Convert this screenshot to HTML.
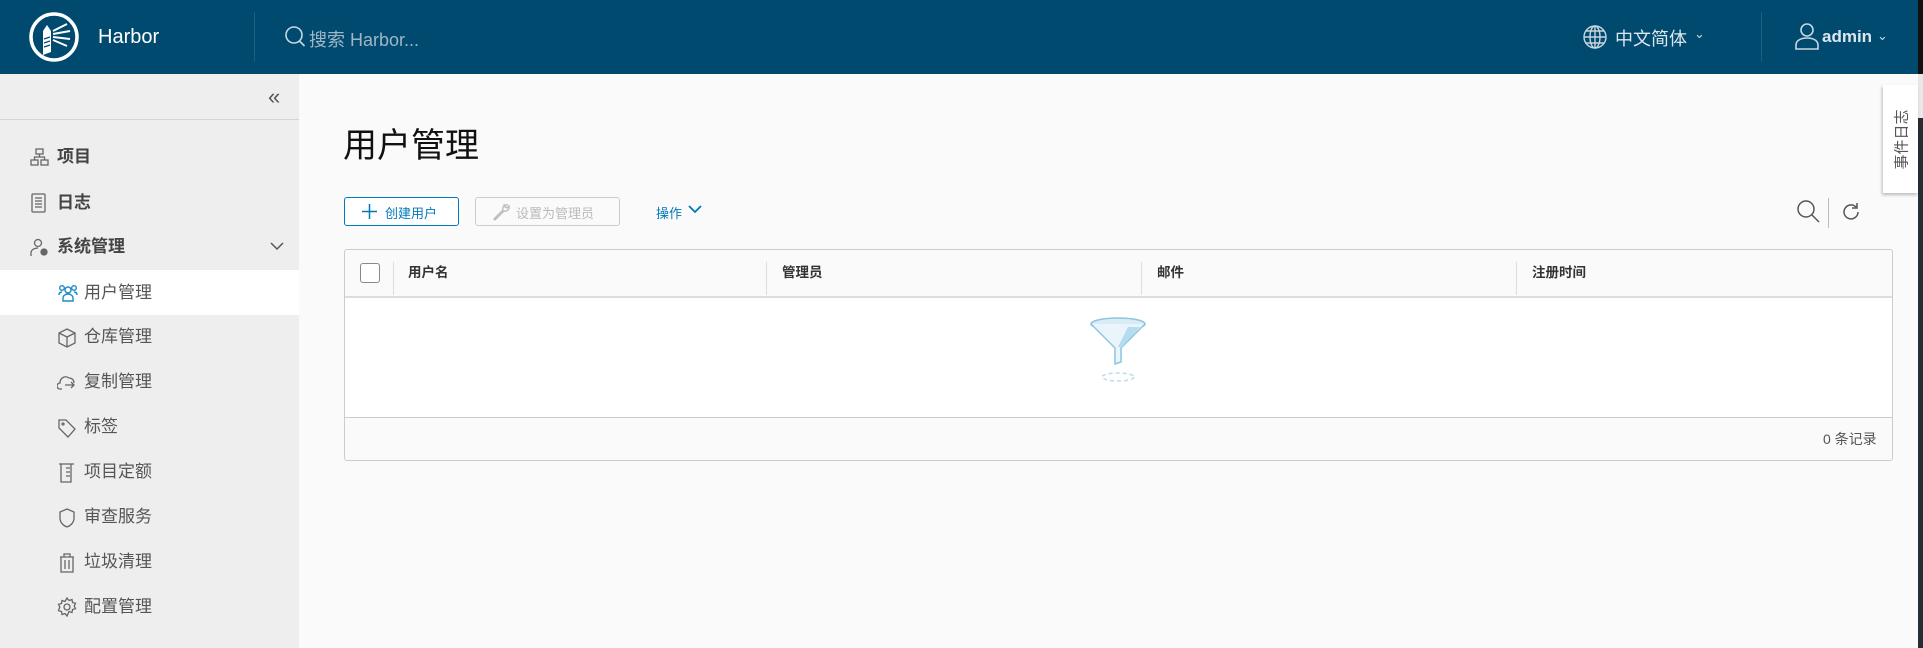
<!DOCTYPE html>
<html><head><meta charset="utf-8"><style>
*{margin:0;padding:0;box-sizing:border-box}
body{width:1923px;height:648px;overflow:hidden;background:#fafafa;font-family:"Liberation Sans","Noto Sans CJK SC",sans-serif;position:relative;color:#333}
.abs{position:absolute}
.hdr{left:0;top:0;width:1918px;height:74px;background:#004a70}
.side{left:0;top:74px;width:299px;height:574px;background:#eeeeee}
.it{position:absolute;left:57px;font-size:17px;font-weight:bold;color:#444;line-height:20px}
.sub{position:absolute;left:84px;font-size:17px;color:#555;line-height:20px}
.ic{position:absolute}
.th{position:absolute;top:263px;font-size:13.5px;font-weight:bold;color:#333;line-height:20px}
.cd{position:absolute;top:262px;width:1px;height:33px;background:#ddd}
</style></head><body>
<div class="abs hdr"></div>
<svg class="abs" style="left:28px;top:11px" width="54" height="54" viewBox="0 0 54 54">
<circle cx="26" cy="26" r="23" fill="none" stroke="#fff" stroke-width="3.5"/>
<path d="M15 20h8v21l-8 3z" fill="#fff"/><path d="M15 20l4-6 4 6z" fill="#fff"/>
<path d="M25 20l14-7M25 23l17-3M25 26l17 2M25 29l14 6" stroke="#fff" stroke-width="2"/>
<path d="M16 28l6-2M16 32l6-2M16 36l6-2" stroke="#004a70" stroke-width="1.2"/>
</svg>
<div class="abs" style="left:98px;top:25px;font-size:20px;color:#fff;line-height:24px">Harbor</div>
<div class="abs" style="left:254px;top:12px;width:1px;height:50px;background:#1c5f80"></div>
<svg class="abs" style="left:284px;top:25px" width="24" height="24" viewBox="0 0 24 24"><circle cx="10" cy="10" r="8" fill="none" stroke="#c8d6df" stroke-width="1.6"/><path d="M15.5 16l5 5" stroke="#c8d6df" stroke-width="1.6"/></svg>
<div class="abs" style="left:309px;top:26px;font-size:18px;color:#9fb6c5">搜索 Harbor...</div>
<svg class="abs" style="left:1582px;top:24px" width="26" height="26" viewBox="0 0 26 26" fill="none" stroke="#c8d6df" stroke-width="1.4"><circle cx="13" cy="13" r="11"/><ellipse cx="13" cy="13" rx="5" ry="11"/><path d="M2 13h22M4 7h18M4 19h18M13 2v22"/></svg>
<div class="abs" style="left:1615px;top:25px;font-size:18px;color:#dde6ec">中文简体</div>
<div class="abs" style="left:1694px;top:26px;font-size:13px;color:#c8d6df">⌄</div>
<div class="abs" style="left:1761px;top:12px;width:1px;height:50px;background:#1c5f80"></div>
<svg class="abs" style="left:1795px;top:22px" width="24" height="28" viewBox="0 0 24 28" fill="none" stroke="#c8d6df" stroke-width="1.6"><circle cx="12" cy="8" r="6"/><path d="M1 27v-4c0-4 4-7 11-7s11 3 11 7v4z"/></svg>
<div class="abs" style="left:1822px;top:27px;font-size:17px;font-weight:bold;color:#dde6ec">admin</div>
<div class="abs" style="left:1877px;top:28px;font-size:13px;color:#c8d6df">⌄</div>
<div class="abs" style="left:1918px;top:0;width:5px;height:74px;background:#111"></div>
<div class="abs" style="left:1918px;top:74px;width:5px;height:44px;background:#e8e8e8"></div>
<div class="abs" style="left:1918px;top:118px;width:5px;height:530px;background:#252d35"></div>

<div class="abs side"></div>
<div class="abs" style="left:268px;top:84px;font-size:22px;color:#555">«</div>
<div class="abs" style="left:0;top:119px;width:299px;height:1px;background:#d4d4d4"></div>
<svg class="ic" style="left:30px;top:148px" width="19" height="19" viewBox="0 0 19 19" fill="none" stroke="#666" stroke-width="1.3"><rect x="6" y="1" width="7" height="5"/><rect x="1" y="12" width="7" height="5"/><rect x="11" y="12" width="7" height="5"/><path d="M9.5 6v3M4.5 12V9h10v3"/></svg>
<div class="it" style="top:147px">项目</div>
<svg class="ic" style="left:31px;top:193px" width="15" height="20" viewBox="0 0 15 20" fill="none" stroke="#666" stroke-width="1.3"><rect x="1" y="1" width="13" height="18" rx="1"/><path d="M4 5h7M4 8h7M4 11h7M4 14h7"/></svg>
<div class="it" style="top:193px">日志</div>
<svg class="ic" style="left:30px;top:238px" width="20" height="19" viewBox="0 0 20 19" fill="none" stroke="#666" stroke-width="1.3"><circle cx="8" cy="5" r="3.5"/><path d="M1 18v-3c0-3 3-5 7-5"/><circle cx="14" cy="14" r="3" fill="#666"/></svg>
<div class="it" style="top:237px">系统管理</div>
<svg class="ic" style="left:270px;top:242px" width="14" height="9" viewBox="0 0 14 9" fill="none" stroke="#555" stroke-width="1.5"><path d="M1 1l6 6 6-6"/></svg>
<div class="abs" style="left:0;top:270px;width:299px;height:45px;background:#fff"></div>
<svg class="ic" style="left:58px;top:284px" width="20" height="18" viewBox="0 0 20 18" fill="none" stroke="#1a8bc8" stroke-width="1.4"><circle cx="10" cy="6" r="3"/><circle cx="4" cy="4" r="2.3"/><circle cx="16" cy="4" r="2.3"/><path d="M5 17v-3c0-2 2-4 5-4s5 2 5 4v3zM1 11c0-2 1-3 3-3M19 11c0-2-1-3-3-3"/></svg>
<div class="sub" style="top:283px">用户管理</div>
<svg class="ic" style="left:58px;top:328px" width="18" height="20" viewBox="0 0 18 20" fill="none" stroke="#666" stroke-width="1.3"><path d="M9 1l8 4v10l-8 4-8-4V5zM1 5l8 4 8-4M9 9v10"/></svg>
<div class="sub" style="top:327px">仓库管理</div>
<svg class="ic" style="left:57px;top:373px" width="20" height="18" viewBox="0 0 20 18" fill="none" stroke="#666" stroke-width="1.3"><path d="M5 16H3a2 2 0 010-6c0-5 5-8 9-5 3 0 5 2 5 5M8 12h9M14 9l3 3-3 3"/></svg>
<div class="sub" style="top:372px">复制管理</div>
<svg class="ic" style="left:58px;top:418px" width="18" height="20" viewBox="0 0 18 20" fill="none" stroke="#666" stroke-width="1.3"><path d="M1 2h7l9 9-7 8-9-9z"/><circle cx="5" cy="6" r="1"/></svg>
<div class="sub" style="top:417px">标签</div>
<svg class="ic" style="left:58px;top:463px" width="17" height="20" viewBox="0 0 17 20" fill="none" stroke="#666" stroke-width="1.3"><path d="M1 1h15M3 1v18h10V1M8 5h4M8 9h4M8 13h4"/></svg>
<div class="sub" style="top:462px">项目定额</div>
<svg class="ic" style="left:59px;top:508px" width="16" height="20" viewBox="0 0 16 20" fill="none" stroke="#666" stroke-width="1.3"><path d="M8 1l7 3v6c0 5-4 8-7 9-3-1-7-4-7-9V4z"/></svg>
<div class="sub" style="top:507px">审查服务</div>
<svg class="ic" style="left:59px;top:553px" width="16" height="20" viewBox="0 0 16 20" fill="none" stroke="#666" stroke-width="1.3"><path d="M1 4h14M5 4V1h6v3M2 4v15h12V4M6 7v9M10 7v9"/></svg>
<div class="sub" style="top:552px">垃圾清理</div>
<svg class="ic" style="left:57px;top:597px" width="20" height="20" viewBox="0 0 20 20" fill="none" stroke="#666" stroke-width="1.3"><circle cx="10" cy="10" r="3"/><path d="M10 1l2 2.5 3-1 .5 3 3 .8-1.3 2.7 1.3 2.7-3 .8-.5 3-3-1L10 19l-2-2.5-3 1-.5-3-3-.8L2.8 10 1.5 7.3l3-.8.5-3 3 1z"/></svg>
<div class="sub" style="top:597px">配置管理</div>

<div class="abs" style="left:343px;top:124px;font-size:34px;color:#111;line-height:44px">用户管理</div>
<div class="abs" style="left:344px;top:197px;width:115px;height:29px;border:1px solid #0079b8;border-radius:3px;background:#fff"></div>
<svg class="abs" style="left:362px;top:204px" width="15" height="15" viewBox="0 0 15 15" stroke="#0079b8" stroke-width="1.5"><path d="M7.5 0v15M0 7.5h15"/></svg>
<div class="abs" style="left:385px;top:203px;font-size:13px;color:#0079b8">创建用户</div>
<div class="abs" style="left:475px;top:197px;width:145px;height:29px;border:1px solid #ccc;border-radius:3px"></div>
<svg class="abs" style="left:492px;top:203px" width="18" height="18" viewBox="0 0 18 18" fill="none" stroke="#bbb" stroke-width="1.3"><path d="M16 2a4 4 0 00-5 5L2 16l1 1 9-9a4 4 0 005-5l-2 2-2-1-1-2z"/></svg>
<div class="abs" style="left:516px;top:203px;font-size:13px;color:#bbb">设置为管理员</div>
<div class="abs" style="left:656px;top:203px;font-size:13px;color:#0079b8">操作</div>
<svg class="abs" style="left:688px;top:205px" width="14" height="9" viewBox="0 0 14 9" fill="none" stroke="#0079b8" stroke-width="1.8"><path d="M1 1l6 6 6-6"/></svg>
<svg class="abs" style="left:1796px;top:199px" width="26" height="26" viewBox="0 0 26 26" fill="none" stroke="#555" stroke-width="1.5"><circle cx="10" cy="10" r="8"/><path d="M16 16l7 7"/></svg>
<div class="abs" style="left:1828px;top:198px;width:1px;height:30px;background:#bbb"></div>
<svg class="abs" style="left:1841px;top:202px" width="20" height="20" viewBox="0 0 20 20" fill="none" stroke="#555" stroke-width="1.5"><path d="M17 10a7 7 0 11-2-5M16 1v5h-5"/></svg>

<div class="abs" style="left:344px;top:249px;width:1549px;height:212px;border:1px solid #ccc;border-radius:3px;background:#fafafa"></div>
<div class="abs" style="left:345px;top:296px;width:1547px;height:2px;background:#ddd"></div>
<div class="abs" style="left:345px;top:298px;width:1547px;height:120px;background:#fff;border-bottom:1px solid #ccc"></div>
<div class="abs" style="left:360px;top:263px;width:20px;height:20px;border:1px solid #888;border-radius:3px;background:#fff"></div>
<div class="cd" style="left:393px"></div><div class="cd" style="left:766px"></div><div class="cd" style="left:1141px"></div><div class="cd" style="left:1516px"></div>
<div class="th" style="left:408px">用户名</div>
<div class="th" style="left:782px">管理员</div>
<div class="th" style="left:1157px">邮件</div>
<div class="th" style="left:1532px">注册时间</div>
<svg class="abs" style="left:1088px;top:315px" width="60" height="70" viewBox="0 0 60 70">
<ellipse cx="30" cy="9" rx="27" ry="6" fill="#d8ecf6" stroke="#8cc4e2" stroke-width="1.5"/>
<path d="M3 9l24 24v16l6-2V33L57 9" fill="#eaf5fb" stroke="#8cc4e2" stroke-width="1.5"/>
<path d="M40 12l-10 20 4 0 18-20z" fill="#b5dbef"/>
<ellipse cx="30" cy="62" rx="16" ry="4" fill="none" stroke="#bcdcee" stroke-width="1.5" stroke-dasharray="4 3"/>
</svg>
<div class="abs" style="left:1823px;top:429px;font-size:14px;color:#555">0 条记录</div>

<div class="abs" style="left:1883px;top:85px;width:35px;height:108px;background:#fff;box-shadow:-1px 2px 3px rgba(0,0,0,.25)"></div>
<div class="abs" style="left:1883px;top:85px;width:35px;height:108px;display:flex;align-items:center;justify-content:center"><div style="transform:rotate(-90deg);white-space:nowrap;font-size:15px;color:#555">事件日志</div></div>
</body></html>
